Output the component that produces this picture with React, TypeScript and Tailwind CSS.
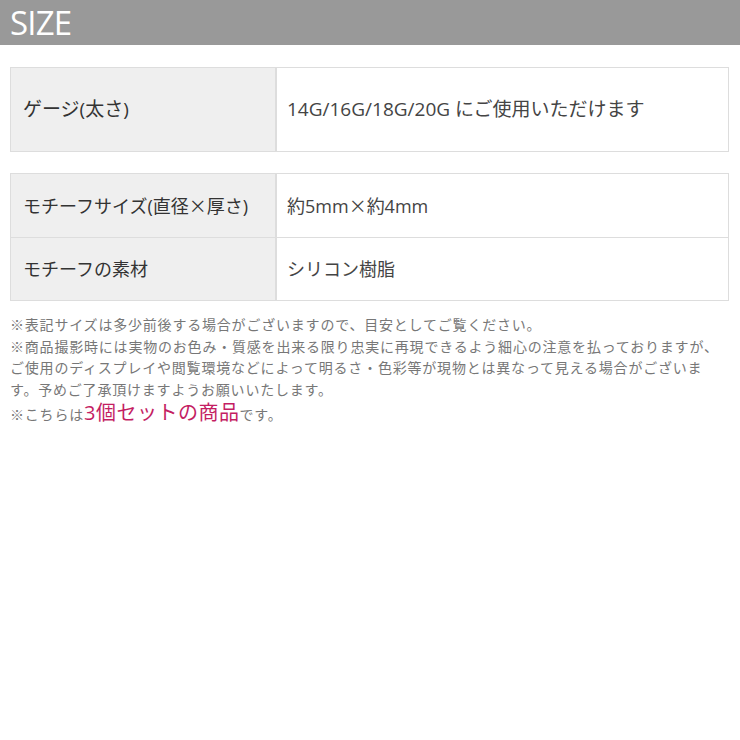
const font = { fontFamily: '"Open Sans", "Noto Sans CJK JP", sans-serif' };
const cjk = { fontFamily: '"Noto Sans CJK JP", sans-serif' };

const Times = () => <span style={cjk}>×</span>;

export default function App() {
  return (
    <div className="w-[740px] h-[740px] bg-white" style={font}>
      {/* Header */}
      <div className="h-[45px] bg-[#999999] flex items-center pl-[10px]">
        <h1 className="text-[33px] leading-none text-white tracking-tight">SIZE</h1>
      </div>

      <div className="px-[10px] pt-[22px]">
        {/* Gauge */}
        <div className="w-[719px] border border-[#dddddd] flex h-[85px]">
          <div className="w-[266px] bg-[#efefef] border-r-2 border-[#dddddd] flex items-center pl-[12px] text-[19px] text-[#333333]">
            ゲージ(太さ)
          </div>
          <div className="flex-1 flex items-center pl-[10px] text-[19px] text-[#444444]">
            14G/16G/18G/20G にご使用いただけます
          </div>
        </div>

        {/* Motif */}
        <div className="w-[719px] border border-[#dddddd] mt-[21px]">
          <div className="flex h-[63px]">
            <div className="w-[266px] bg-[#efefef] border-r-2 border-[#dddddd] flex items-center pl-[12px] text-[18px] text-[#333333]">
              <span>モチーフサイズ(直径<Times />厚さ)</span>
            </div>
            <div className="flex-1 flex items-center pl-[10px] text-[18px] text-[#444444]">
              <span>約5mm<Times />約4mm</span>
            </div>
          </div>
          <div className="flex h-[63px] border-t border-[#dddddd]">
            <div className="w-[266px] bg-[#efefef] border-r-2 border-[#dddddd] flex items-center pl-[12px] text-[18px] text-[#333333]">
              モチーフの素材
            </div>
            <div className="flex-1 flex items-center pl-[10px] text-[18px] text-[#444444]">シリコン樹脂</div>
          </div>
        </div>

        {/* Notes */}
        <div className="mt-[13px] text-[14px] leading-[21.5px] text-[#777777] tracking-[0.8px] whitespace-nowrap">
          <p>※表記サイズは多少前後する場合がございますので、目安としてご覧ください。</p>
          <p>※商品撮影時には実物のお色み・質感を出来る限り忠実に再現できるよう細心の注意を払っておりますが、</p>
          <p>ご使用のディスプレイや閲覧環境などによって明るさ・色彩等が現物とは異なって見える場合がございま</p>
          <p>す。予めご了承頂けますようお願いいたします。</p>
          <p className="mt-[2px]">
            ※こちらは<span className="text-[20px] tracking-[0.5px] text-[#c41e63]">3個セットの商品</span>です。
          </p>
        </div>
      </div>
    </div>
  );
}
